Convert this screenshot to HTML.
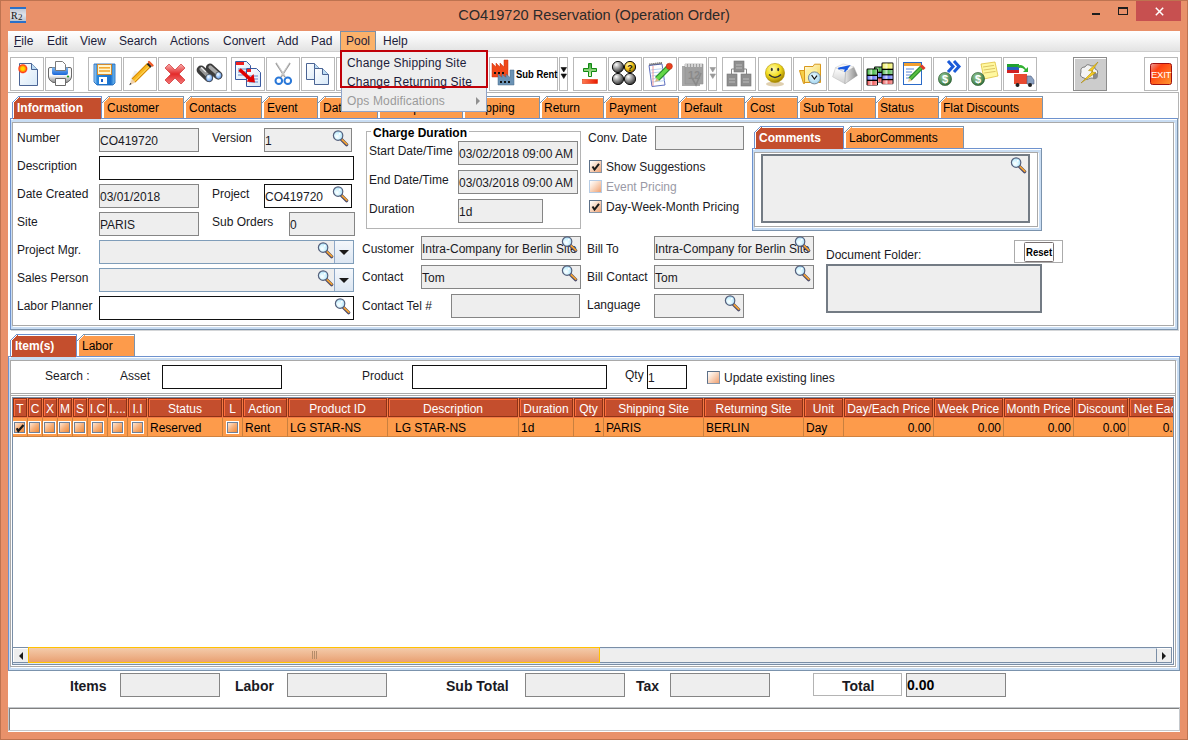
<!DOCTYPE html><html><head><meta charset="utf-8"><style>
*{box-sizing:border-box;margin:0;padding:0}
html,body{width:1188px;height:740px;overflow:hidden}
body{position:relative;background:#E9916A;font-family:"Liberation Sans",sans-serif;font-size:12px;color:#000}
.a{position:absolute}
.t{line-height:14px;white-space:nowrap;color:#1a1a24}
.b{font-weight:bold}
.fg{background:#EEEEEE;border:1px solid #8E8E8E}
.fw{background:#fff;border:1px solid #101010}
.fc{background:#EEEEEE;border:1px solid #7F9DB9}
</style></head><body>
<div class="a " style="left:0px;top:0px;width:1188px;height:740px;border:1px solid #BE7350;"></div>
<div class="a " style="left:8px;top:31px;width:1172px;height:701px;background:#fff;"></div>
<div class="a t" style="left:0;top:6px;width:1188px;text-align:center;font-size:14.6px;line-height:18px;color:#2a2a2a">CO419720 Reservation (Operation Order)</div>
<div class="a " style="left:1136px;top:1px;width:45px;height:20px;background:#C75050;"></div>
<svg class="a" style="left:1155px;top:7px" width="9" height="9"><path d="M0.8 0.8L8.2 8.2M8.2 0.8L0.8 8.2" stroke="#fff" stroke-width="1.5"/></svg>
<div class="a " style="left:1118px;top:7px;width:10px;height:8px;border:1px solid #1e1e1e;border-top-width:2px;"></div>
<div class="a " style="left:1092px;top:13px;width:8px;height:2px;background:#1e1e1e;"></div>
<svg class="a" style="left:10px;top:7px" width="16" height="16"><defs><linearGradient id="r2g" x1="0" y1="0" x2="0" y2="1"><stop offset="0" stop-color="#b8c0cc"/><stop offset="0.5" stop-color="#e0e4ea"/><stop offset="1" stop-color="#b0b8c4"/></linearGradient></defs><rect x="0" y="0" width="16" height="16" fill="url(#r2g)"/><rect x="0" y="0" width="16" height="2" fill="#2a70c8"/><rect x="0" y="14" width="16" height="2" fill="#2a70c8"/><text x="1" y="12" font-family="Liberation Serif" font-size="10" fill="#111">R</text><text x="8" y="12.5" font-family="Liberation Serif" font-size="9" fill="#222">2</text></svg>
<div class="a " style="left:8px;top:31px;width:1172px;height:20px;background:linear-gradient(#ffffff 0%,#f7f7f7 35%,#e3e3e3 100%);"></div>
<div class="a " style="left:8px;top:51px;width:1172px;height:1px;background:#cdcdcd;"></div>
<div class="a " style="left:340px;top:31px;width:36px;height:19px;background:#FBB16A;border:1px solid #7A90A8;border-bottom:none;"></div>
<div class="a t" style="left:14px;top:34px;color:#1c1c3a"><span style="text-decoration:underline;text-underline-offset:1px">F</span>ile</div>
<div class="a t" style="left:47px;top:34px;color:#1c1c3a">Edit</div>
<div class="a t" style="left:80px;top:34px;color:#1c1c3a">View</div>
<div class="a t" style="left:119px;top:34px;color:#1c1c3a">Search</div>
<div class="a t" style="left:170px;top:34px;color:#1c1c3a">Actions</div>
<div class="a t" style="left:223px;top:34px;color:#1c1c3a">Convert</div>
<div class="a t" style="left:277px;top:34px;color:#1c1c3a">Add</div>
<div class="a t" style="left:311px;top:34px;color:#1c1c3a">Pad</div>
<div class="a t" style="left:346px;top:34px;color:#1c1c3a">Pool</div>
<div class="a t" style="left:383px;top:34px;color:#1c1c3a">Help</div>
<div class="a " style="left:8px;top:92px;width:1171px;height:1px;background:#b4b4b4;"></div>
<div class="a " style="left:10px;top:57px;width:34px;height:34px;border:1px solid #b9b9b9;background:#fff;"></div>
<div class="a " style="left:45px;top:57px;width:29px;height:34px;border:1px solid #b9b9b9;background:#fff;"></div>
<div class="a " style="left:88px;top:57px;width:34px;height:34px;border:1px solid #b9b9b9;background:#fff;"></div>
<div class="a " style="left:123px;top:57px;width:34px;height:34px;border:1px solid #b9b9b9;background:#fff;"></div>
<div class="a " style="left:158px;top:57px;width:34px;height:34px;border:1px solid #b9b9b9;background:#fff;"></div>
<div class="a " style="left:193px;top:57px;width:34px;height:34px;border:1px solid #b9b9b9;background:#fff;"></div>
<div class="a " style="left:231px;top:57px;width:34px;height:34px;border:1px solid #b9b9b9;background:#fff;"></div>
<div class="a " style="left:266px;top:57px;width:34px;height:34px;border:1px solid #b9b9b9;background:#fff;"></div>
<div class="a " style="left:301px;top:57px;width:34px;height:34px;border:1px solid #b9b9b9;background:#fff;"></div>
<div class="a " style="left:336px;top:57px;width:34px;height:34px;border:1px solid #b9b9b9;background:#fff;"></div>
<div class="a " style="left:371px;top:57px;width:34px;height:34px;border:1px solid #b9b9b9;background:#fff;"></div>
<div class="a " style="left:406px;top:57px;width:34px;height:34px;border:1px solid #b9b9b9;background:#fff;"></div>
<div class="a " style="left:441px;top:57px;width:34px;height:34px;border:1px solid #b9b9b9;background:#fff;"></div>
<div class="a " style="left:489px;top:57px;width:69px;height:34px;border:1px solid #b9b9b9;background:#fff;"></div>
<div class="a " style="left:559px;top:57px;width:9px;height:34px;border:1px solid #b9b9b9;background:#fff;"></div>
<div class="a " style="left:573px;top:57px;width:34px;height:34px;border:1px solid #b9b9b9;background:#fff;"></div>
<div class="a " style="left:608px;top:57px;width:34px;height:34px;border:1px solid #b9b9b9;background:#fff;"></div>
<div class="a " style="left:643px;top:57px;width:34px;height:34px;border:1px solid #b9b9b9;background:#fff;"></div>
<div class="a " style="left:678px;top:57px;width:29px;height:34px;border:1px solid #b9b9b9;background:#fff;"></div>
<div class="a " style="left:708px;top:57px;width:9px;height:34px;border:1px solid #b9b9b9;background:#fff;"></div>
<div class="a " style="left:722px;top:57px;width:34px;height:34px;border:1px solid #b9b9b9;background:#fff;"></div>
<div class="a " style="left:758px;top:57px;width:34px;height:34px;border:1px solid #b9b9b9;background:#fff;"></div>
<div class="a " style="left:793px;top:57px;width:34px;height:34px;border:1px solid #b9b9b9;background:#fff;"></div>
<div class="a " style="left:828px;top:57px;width:34px;height:34px;border:1px solid #b9b9b9;background:#fff;"></div>
<div class="a " style="left:863px;top:57px;width:34px;height:34px;border:1px solid #b9b9b9;background:#fff;"></div>
<div class="a " style="left:898px;top:57px;width:34px;height:34px;border:1px solid #b9b9b9;background:#fff;"></div>
<div class="a " style="left:933px;top:57px;width:34px;height:34px;border:1px solid #b9b9b9;background:#fff;"></div>
<div class="a " style="left:968px;top:57px;width:34px;height:34px;border:1px solid #b9b9b9;background:#fff;"></div>
<div class="a " style="left:1003px;top:57px;width:34px;height:34px;border:1px solid #b9b9b9;background:#fff;"></div>
<div class="a " style="left:1144px;top:57px;width:34px;height:34px;border:1px solid #b9b9b9;background:#fff;"></div>
<div class="a " style="left:1073px;top:57px;width:34px;height:34px;border:1px solid #8c8c8c;background:#cccccc;box-shadow:inset 1px 1px 0 #fff;"></div>
<div class="a" style="left:11px;top:119px;width:1168px;height:212px;background:#D4D6D8"></div>
<div class="a" style="left:10px;top:118px;width:1168px;height:212px;border:1px solid #6E92CE;border-right-color:#7B93AD;border-bottom-color:#7B93AD;background:#C9DDF3"></div>
<div class="a" style="left:11px;top:119px;width:1166px;height:1px;background:#fff"></div>
<div class="a" style="left:13px;top:118px;width:88px;height:2px;background:#C9DDF3"></div>
<div class="a" style="left:12px;top:122px;width:1162px;height:204px;border:1px solid #A9A9A9;box-shadow:1px 1px 0 #fff;background:#fff"></div>
<div class="a" style="left:1178px;top:92px;width:1px;height:27px;background:#B4B4B4"></div>
<svg class="a" style="left:0;top:96px" width="1188" height="23" shape-rendering="crispEdges"><polygon points="13,23 13,7 19,1 101,1 101,23" fill="#C44E2D"/><path d="M19.5 1.5H101M13.5 7V22" stroke="#fff" stroke-width="1" fill="none"/><path d="M18 0.5H102M101.5 0V22" stroke="#6E92CE" stroke-width="1" fill="none"/><rect x="12" y="6" width="1" height="1" fill="#6E92CE"/><rect x="13" y="5" width="1" height="1" fill="#6E92CE"/><rect x="14" y="4" width="1" height="1" fill="#6E92CE"/><rect x="15" y="3" width="1" height="1" fill="#6E92CE"/><rect x="16" y="2" width="1" height="1" fill="#6E92CE"/><rect x="17" y="1" width="1" height="1" fill="#6E92CE"/><rect x="18" y="0" width="1" height="1" fill="#6E92CE"/><path d="M12.5 6V23" stroke="#6E92CE" stroke-width="1" fill="none"/></svg>
<div class="a t" style="left:17px;top:101px;color:#fff;font-weight:bold;">Information</div>
<svg class="a" style="left:0;top:96px" width="1188" height="23" shape-rendering="crispEdges"><polygon points="103,22 103,7 109,1 183,1 183,22" fill="#FD9B4B"/><path d="M109.5 1.5H183M103.5 7V22" stroke="#fff" stroke-width="1" fill="none"/><path d="M108 0.5H184M183.5 0V22" stroke="#7B93AD" stroke-width="1" fill="none"/><rect x="102" y="6" width="1" height="1" fill="#7B93AD"/><rect x="103" y="5" width="1" height="1" fill="#7B93AD"/><rect x="104" y="4" width="1" height="1" fill="#7B93AD"/><rect x="105" y="3" width="1" height="1" fill="#7B93AD"/><rect x="106" y="2" width="1" height="1" fill="#7B93AD"/><rect x="107" y="1" width="1" height="1" fill="#7B93AD"/><rect x="108" y="0" width="1" height="1" fill="#7B93AD"/></svg>
<div class="a t" style="left:107px;top:101px;color:#000;">Customer</div>
<svg class="a" style="left:0;top:96px" width="1188" height="23" shape-rendering="crispEdges"><polygon points="185,22 185,7 191,1 261,1 261,22" fill="#FD9B4B"/><path d="M191.5 1.5H261M185.5 7V22" stroke="#fff" stroke-width="1" fill="none"/><path d="M190 0.5H262M261.5 0V22" stroke="#7B93AD" stroke-width="1" fill="none"/><rect x="184" y="6" width="1" height="1" fill="#7B93AD"/><rect x="185" y="5" width="1" height="1" fill="#7B93AD"/><rect x="186" y="4" width="1" height="1" fill="#7B93AD"/><rect x="187" y="3" width="1" height="1" fill="#7B93AD"/><rect x="188" y="2" width="1" height="1" fill="#7B93AD"/><rect x="189" y="1" width="1" height="1" fill="#7B93AD"/><rect x="190" y="0" width="1" height="1" fill="#7B93AD"/></svg>
<div class="a t" style="left:189px;top:101px;color:#000;">Contacts</div>
<svg class="a" style="left:0;top:96px" width="1188" height="23" shape-rendering="crispEdges"><polygon points="263,22 263,7 269,1 317,1 317,22" fill="#FD9B4B"/><path d="M269.5 1.5H317M263.5 7V22" stroke="#fff" stroke-width="1" fill="none"/><path d="M268 0.5H318M317.5 0V22" stroke="#7B93AD" stroke-width="1" fill="none"/><rect x="262" y="6" width="1" height="1" fill="#7B93AD"/><rect x="263" y="5" width="1" height="1" fill="#7B93AD"/><rect x="264" y="4" width="1" height="1" fill="#7B93AD"/><rect x="265" y="3" width="1" height="1" fill="#7B93AD"/><rect x="266" y="2" width="1" height="1" fill="#7B93AD"/><rect x="267" y="1" width="1" height="1" fill="#7B93AD"/><rect x="268" y="0" width="1" height="1" fill="#7B93AD"/></svg>
<div class="a t" style="left:267px;top:101px;color:#000;">Event</div>
<svg class="a" style="left:0;top:96px" width="1188" height="23" shape-rendering="crispEdges"><polygon points="319,22 319,7 325,1 377,1 377,22" fill="#FD9B4B"/><path d="M325.5 1.5H377M319.5 7V22" stroke="#fff" stroke-width="1" fill="none"/><path d="M324 0.5H378M377.5 0V22" stroke="#7B93AD" stroke-width="1" fill="none"/><rect x="318" y="6" width="1" height="1" fill="#7B93AD"/><rect x="319" y="5" width="1" height="1" fill="#7B93AD"/><rect x="320" y="4" width="1" height="1" fill="#7B93AD"/><rect x="321" y="3" width="1" height="1" fill="#7B93AD"/><rect x="322" y="2" width="1" height="1" fill="#7B93AD"/><rect x="323" y="1" width="1" height="1" fill="#7B93AD"/><rect x="324" y="0" width="1" height="1" fill="#7B93AD"/></svg>
<div class="a t" style="left:323px;top:101px;color:#000;">Date</div>
<svg class="a" style="left:0;top:96px" width="1188" height="23" shape-rendering="crispEdges"><polygon points="379,22 379,7 385,1 462,1 462,22" fill="#FD9B4B"/><path d="M385.5 1.5H462M379.5 7V22" stroke="#fff" stroke-width="1" fill="none"/><path d="M384 0.5H463M462.5 0V22" stroke="#7B93AD" stroke-width="1" fill="none"/><rect x="378" y="6" width="1" height="1" fill="#7B93AD"/><rect x="379" y="5" width="1" height="1" fill="#7B93AD"/><rect x="380" y="4" width="1" height="1" fill="#7B93AD"/><rect x="381" y="3" width="1" height="1" fill="#7B93AD"/><rect x="382" y="2" width="1" height="1" fill="#7B93AD"/><rect x="383" y="1" width="1" height="1" fill="#7B93AD"/><rect x="384" y="0" width="1" height="1" fill="#7B93AD"/></svg>
<div class="a t" style="left:383px;top:101px;color:#000;">Transport</div>
<svg class="a" style="left:0;top:96px" width="1188" height="23" shape-rendering="crispEdges"><polygon points="464,22 464,7 470,1 539,1 539,22" fill="#FD9B4B"/><path d="M470.5 1.5H539M464.5 7V22" stroke="#fff" stroke-width="1" fill="none"/><path d="M469 0.5H540M539.5 0V22" stroke="#7B93AD" stroke-width="1" fill="none"/><rect x="463" y="6" width="1" height="1" fill="#7B93AD"/><rect x="464" y="5" width="1" height="1" fill="#7B93AD"/><rect x="465" y="4" width="1" height="1" fill="#7B93AD"/><rect x="466" y="3" width="1" height="1" fill="#7B93AD"/><rect x="467" y="2" width="1" height="1" fill="#7B93AD"/><rect x="468" y="1" width="1" height="1" fill="#7B93AD"/><rect x="469" y="0" width="1" height="1" fill="#7B93AD"/></svg>
<div class="a t" style="left:468px;top:101px;color:#000;">Shipping</div>
<svg class="a" style="left:0;top:96px" width="1188" height="23" shape-rendering="crispEdges"><polygon points="541,22 541,7 547,1 603,1 603,22" fill="#FD9B4B"/><path d="M547.5 1.5H603M541.5 7V22" stroke="#fff" stroke-width="1" fill="none"/><path d="M546 0.5H604M603.5 0V22" stroke="#7B93AD" stroke-width="1" fill="none"/><rect x="540" y="6" width="1" height="1" fill="#7B93AD"/><rect x="541" y="5" width="1" height="1" fill="#7B93AD"/><rect x="542" y="4" width="1" height="1" fill="#7B93AD"/><rect x="543" y="3" width="1" height="1" fill="#7B93AD"/><rect x="544" y="2" width="1" height="1" fill="#7B93AD"/><rect x="545" y="1" width="1" height="1" fill="#7B93AD"/><rect x="546" y="0" width="1" height="1" fill="#7B93AD"/></svg>
<div class="a t" style="left:544px;top:101px;color:#000;">Return</div>
<svg class="a" style="left:0;top:96px" width="1188" height="23" shape-rendering="crispEdges"><polygon points="605,22 605,7 611,1 678,1 678,22" fill="#FD9B4B"/><path d="M611.5 1.5H678M605.5 7V22" stroke="#fff" stroke-width="1" fill="none"/><path d="M610 0.5H679M678.5 0V22" stroke="#7B93AD" stroke-width="1" fill="none"/><rect x="604" y="6" width="1" height="1" fill="#7B93AD"/><rect x="605" y="5" width="1" height="1" fill="#7B93AD"/><rect x="606" y="4" width="1" height="1" fill="#7B93AD"/><rect x="607" y="3" width="1" height="1" fill="#7B93AD"/><rect x="608" y="2" width="1" height="1" fill="#7B93AD"/><rect x="609" y="1" width="1" height="1" fill="#7B93AD"/><rect x="610" y="0" width="1" height="1" fill="#7B93AD"/></svg>
<div class="a t" style="left:609px;top:101px;color:#000;">Payment</div>
<svg class="a" style="left:0;top:96px" width="1188" height="23" shape-rendering="crispEdges"><polygon points="680,22 680,7 686,1 744,1 744,22" fill="#FD9B4B"/><path d="M686.5 1.5H744M680.5 7V22" stroke="#fff" stroke-width="1" fill="none"/><path d="M685 0.5H745M744.5 0V22" stroke="#7B93AD" stroke-width="1" fill="none"/><rect x="679" y="6" width="1" height="1" fill="#7B93AD"/><rect x="680" y="5" width="1" height="1" fill="#7B93AD"/><rect x="681" y="4" width="1" height="1" fill="#7B93AD"/><rect x="682" y="3" width="1" height="1" fill="#7B93AD"/><rect x="683" y="2" width="1" height="1" fill="#7B93AD"/><rect x="684" y="1" width="1" height="1" fill="#7B93AD"/><rect x="685" y="0" width="1" height="1" fill="#7B93AD"/></svg>
<div class="a t" style="left:684px;top:101px;color:#000;">Default</div>
<svg class="a" style="left:0;top:96px" width="1188" height="23" shape-rendering="crispEdges"><polygon points="746,22 746,7 752,1 797,1 797,22" fill="#FD9B4B"/><path d="M752.5 1.5H797M746.5 7V22" stroke="#fff" stroke-width="1" fill="none"/><path d="M751 0.5H798M797.5 0V22" stroke="#7B93AD" stroke-width="1" fill="none"/><rect x="745" y="6" width="1" height="1" fill="#7B93AD"/><rect x="746" y="5" width="1" height="1" fill="#7B93AD"/><rect x="747" y="4" width="1" height="1" fill="#7B93AD"/><rect x="748" y="3" width="1" height="1" fill="#7B93AD"/><rect x="749" y="2" width="1" height="1" fill="#7B93AD"/><rect x="750" y="1" width="1" height="1" fill="#7B93AD"/><rect x="751" y="0" width="1" height="1" fill="#7B93AD"/></svg>
<div class="a t" style="left:750px;top:101px;color:#000;">Cost</div>
<svg class="a" style="left:0;top:96px" width="1188" height="23" shape-rendering="crispEdges"><polygon points="799,22 799,7 805,1 875,1 875,22" fill="#FD9B4B"/><path d="M805.5 1.5H875M799.5 7V22" stroke="#fff" stroke-width="1" fill="none"/><path d="M804 0.5H876M875.5 0V22" stroke="#7B93AD" stroke-width="1" fill="none"/><rect x="798" y="6" width="1" height="1" fill="#7B93AD"/><rect x="799" y="5" width="1" height="1" fill="#7B93AD"/><rect x="800" y="4" width="1" height="1" fill="#7B93AD"/><rect x="801" y="3" width="1" height="1" fill="#7B93AD"/><rect x="802" y="2" width="1" height="1" fill="#7B93AD"/><rect x="803" y="1" width="1" height="1" fill="#7B93AD"/><rect x="804" y="0" width="1" height="1" fill="#7B93AD"/></svg>
<div class="a t" style="left:803px;top:101px;color:#000;">Sub Total</div>
<svg class="a" style="left:0;top:96px" width="1188" height="23" shape-rendering="crispEdges"><polygon points="877,22 877,7 883,1 938,1 938,22" fill="#FD9B4B"/><path d="M883.5 1.5H938M877.5 7V22" stroke="#fff" stroke-width="1" fill="none"/><path d="M882 0.5H939M938.5 0V22" stroke="#7B93AD" stroke-width="1" fill="none"/><rect x="876" y="6" width="1" height="1" fill="#7B93AD"/><rect x="877" y="5" width="1" height="1" fill="#7B93AD"/><rect x="878" y="4" width="1" height="1" fill="#7B93AD"/><rect x="879" y="3" width="1" height="1" fill="#7B93AD"/><rect x="880" y="2" width="1" height="1" fill="#7B93AD"/><rect x="881" y="1" width="1" height="1" fill="#7B93AD"/><rect x="882" y="0" width="1" height="1" fill="#7B93AD"/></svg>
<div class="a t" style="left:880px;top:101px;color:#000;">Status</div>
<svg class="a" style="left:0;top:96px" width="1188" height="23" shape-rendering="crispEdges"><polygon points="940,22 940,7 946,1 1042,1 1042,22" fill="#FD9B4B"/><path d="M946.5 1.5H1042M940.5 7V22" stroke="#fff" stroke-width="1" fill="none"/><path d="M945 0.5H1043M1042.5 0V22" stroke="#7B93AD" stroke-width="1" fill="none"/><rect x="939" y="6" width="1" height="1" fill="#7B93AD"/><rect x="940" y="5" width="1" height="1" fill="#7B93AD"/><rect x="941" y="4" width="1" height="1" fill="#7B93AD"/><rect x="942" y="3" width="1" height="1" fill="#7B93AD"/><rect x="943" y="2" width="1" height="1" fill="#7B93AD"/><rect x="944" y="1" width="1" height="1" fill="#7B93AD"/><rect x="945" y="0" width="1" height="1" fill="#7B93AD"/></svg>
<div class="a t" style="left:943px;top:101px;color:#000;">Flat Discounts</div>
<div class="a t" style="left:17px;top:131px;">Number</div>
<div class="a t" style="left:17px;top:159px;">Description</div>
<div class="a t" style="left:17px;top:187px;">Date Created</div>
<div class="a t" style="left:17px;top:215px;">Site</div>
<div class="a t" style="left:17px;top:243px;">Project Mgr.</div>
<div class="a t" style="left:17px;top:271px;">Sales Person</div>
<div class="a t" style="left:17px;top:299px;">Labor Planner</div>
<div class="a t" style="left:212px;top:131px;">Version</div>
<div class="a t" style="left:212px;top:187px;">Project</div>
<div class="a t" style="left:212px;top:215px;">Sub Orders</div>
<div class="a" style="left:99px;top:128px;width:100px;height:24px;background:#EEEEEE;border:1px solid #858585;"></div>
<div class="a t" style="left:100px;top:134px;color:#1a1a24">CO419720</div>
<div class="a" style="left:264px;top:128px;width:88px;height:24px;background:#EEEEEE;border:1px solid #858585;"></div>
<div class="a t" style="left:265px;top:134px;color:#1a1a24">1</div>
<svg class="a" style="left:332px;top:130px" width="17" height="17" viewBox="0 0 17 17"><defs><radialGradient id="lg" cx="0.4" cy="0.6" r="0.6"><stop offset="0" stop-color="#ffffff"/><stop offset="0.5" stop-color="#d8f6ff"/><stop offset="1" stop-color="#a9dcf5"/></radialGradient></defs><line x1="9.6" y1="9.6" x2="14.6" y2="14.6" stroke="#4a4a6a" stroke-width="3.4" stroke-linecap="round"/><line x1="10.2" y1="9.8" x2="14.8" y2="14.2" stroke="#F2A233" stroke-width="1.8" stroke-linecap="round"/><circle cx="6.1" cy="5.6" r="4.7" fill="url(#lg)" stroke="#55607c" stroke-width="1.2"/><circle cx="7.8" cy="3.8" r="1" fill="#fff"/></svg>
<div class="a" style="left:99px;top:156px;width:255px;height:24px;background:#fff;border:1px solid #111;"></div>
<div class="a" style="left:99px;top:184px;width:100px;height:24px;background:#EEEEEE;border:1px solid #858585;"></div>
<div class="a t" style="left:100px;top:190px;color:#1a1a24">03/01/2018</div>
<div class="a" style="left:264px;top:184px;width:88px;height:24px;background:#fff;border:1px solid #111;"></div>
<div class="a t" style="left:265px;top:190px;color:#1a1a24">CO419720</div>
<svg class="a" style="left:332px;top:186px" width="17" height="17" viewBox="0 0 17 17"><defs><radialGradient id="lg" cx="0.4" cy="0.6" r="0.6"><stop offset="0" stop-color="#ffffff"/><stop offset="0.5" stop-color="#d8f6ff"/><stop offset="1" stop-color="#a9dcf5"/></radialGradient></defs><line x1="9.6" y1="9.6" x2="14.6" y2="14.6" stroke="#4a4a6a" stroke-width="3.4" stroke-linecap="round"/><line x1="10.2" y1="9.8" x2="14.8" y2="14.2" stroke="#F2A233" stroke-width="1.8" stroke-linecap="round"/><circle cx="6.1" cy="5.6" r="4.7" fill="url(#lg)" stroke="#55607c" stroke-width="1.2"/><circle cx="7.8" cy="3.8" r="1" fill="#fff"/></svg>
<div class="a" style="left:99px;top:212px;width:100px;height:24px;background:#EEEEEE;border:1px solid #858585;"></div>
<div class="a t" style="left:100px;top:218px;color:#1a1a24">PARIS</div>
<div class="a" style="left:289px;top:212px;width:66px;height:24px;background:#EEEEEE;border:1px solid #858585;"></div>
<div class="a t" style="left:290px;top:218px;color:#1a1a24">0</div>
<div class="a" style="left:99px;top:240px;width:255px;height:24px;background:#EEEEEE;border:1px solid #7F9DB9;"></div>
<div class="a" style="left:334px;top:241px;width:19px;height:22px;background:linear-gradient(#f4f7fb,#dce6f2);border-left:1px solid #8FA8C8"></div>
<div class="a" style="left:339px;top:250px;width:0;height:0;border-top:5px solid #1a1a1a;border-left:5px solid transparent;border-right:5px solid transparent"></div>
<svg class="a" style="left:317px;top:242px" width="17" height="17" viewBox="0 0 17 17"><defs><radialGradient id="lg" cx="0.4" cy="0.6" r="0.6"><stop offset="0" stop-color="#ffffff"/><stop offset="0.5" stop-color="#d8f6ff"/><stop offset="1" stop-color="#a9dcf5"/></radialGradient></defs><line x1="9.6" y1="9.6" x2="14.6" y2="14.6" stroke="#4a4a6a" stroke-width="3.4" stroke-linecap="round"/><line x1="10.2" y1="9.8" x2="14.8" y2="14.2" stroke="#F2A233" stroke-width="1.8" stroke-linecap="round"/><circle cx="6.1" cy="5.6" r="4.7" fill="url(#lg)" stroke="#55607c" stroke-width="1.2"/><circle cx="7.8" cy="3.8" r="1" fill="#fff"/></svg>
<div class="a" style="left:99px;top:268px;width:255px;height:24px;background:#EEEEEE;border:1px solid #7F9DB9;"></div>
<div class="a" style="left:334px;top:269px;width:19px;height:22px;background:linear-gradient(#f4f7fb,#dce6f2);border-left:1px solid #8FA8C8"></div>
<div class="a" style="left:339px;top:278px;width:0;height:0;border-top:5px solid #1a1a1a;border-left:5px solid transparent;border-right:5px solid transparent"></div>
<svg class="a" style="left:317px;top:270px" width="17" height="17" viewBox="0 0 17 17"><defs><radialGradient id="lg" cx="0.4" cy="0.6" r="0.6"><stop offset="0" stop-color="#ffffff"/><stop offset="0.5" stop-color="#d8f6ff"/><stop offset="1" stop-color="#a9dcf5"/></radialGradient></defs><line x1="9.6" y1="9.6" x2="14.6" y2="14.6" stroke="#4a4a6a" stroke-width="3.4" stroke-linecap="round"/><line x1="10.2" y1="9.8" x2="14.8" y2="14.2" stroke="#F2A233" stroke-width="1.8" stroke-linecap="round"/><circle cx="6.1" cy="5.6" r="4.7" fill="url(#lg)" stroke="#55607c" stroke-width="1.2"/><circle cx="7.8" cy="3.8" r="1" fill="#fff"/></svg>
<div class="a" style="left:99px;top:296px;width:255px;height:24px;background:#fff;border:1px solid #111;"></div>
<svg class="a" style="left:334px;top:298px" width="17" height="17" viewBox="0 0 17 17"><defs><radialGradient id="lg" cx="0.4" cy="0.6" r="0.6"><stop offset="0" stop-color="#ffffff"/><stop offset="0.5" stop-color="#d8f6ff"/><stop offset="1" stop-color="#a9dcf5"/></radialGradient></defs><line x1="9.6" y1="9.6" x2="14.6" y2="14.6" stroke="#4a4a6a" stroke-width="3.4" stroke-linecap="round"/><line x1="10.2" y1="9.8" x2="14.8" y2="14.2" stroke="#F2A233" stroke-width="1.8" stroke-linecap="round"/><circle cx="6.1" cy="5.6" r="4.7" fill="url(#lg)" stroke="#55607c" stroke-width="1.2"/><circle cx="7.8" cy="3.8" r="1" fill="#fff"/></svg>
<div class="a" style="left:366px;top:131px;width:215px;height:98px;border:1px solid #B4B4B4"></div>
<div class="a t b" style="left:371px;top:126px;background:#fff;padding:0 2px;color:#000">Charge Duration</div>
<div class="a t" style="left:369px;top:144px;">Start Date/Time</div>
<div class="a" style="left:458px;top:141px;width:120px;height:24px;background:#EEEEEE;border:1px solid #858585;"></div>
<div class="a t" style="left:459px;top:147px;color:#1a1a24">03/02/2018 09:00 AM</div>
<div class="a t" style="left:369px;top:173px;">End Date/Time</div>
<div class="a" style="left:458px;top:170px;width:120px;height:24px;background:#EEEEEE;border:1px solid #858585;"></div>
<div class="a t" style="left:459px;top:176px;color:#1a1a24">03/03/2018 09:00 AM</div>
<div class="a t" style="left:369px;top:202px;">Duration</div>
<div class="a" style="left:458px;top:199px;width:85px;height:24px;background:#EEEEEE;border:1px solid #858585;"></div>
<div class="a t" style="left:459px;top:205px;color:#1a1a24">1d</div>
<div class="a t" style="left:362px;top:242px;">Customer</div>
<div class="a" style="left:421px;top:236px;width:160px;height:24px;background:#EEEEEE;border:1px solid #858585;"></div>
<div class="a t" style="left:422px;top:242px;color:#1a1a24">Intra-Company for Berlin Site</div>
<svg class="a" style="left:561px;top:236px" width="17" height="17" viewBox="0 0 17 17"><defs><radialGradient id="lg" cx="0.4" cy="0.6" r="0.6"><stop offset="0" stop-color="#ffffff"/><stop offset="0.5" stop-color="#d8f6ff"/><stop offset="1" stop-color="#a9dcf5"/></radialGradient></defs><line x1="9.6" y1="9.6" x2="14.6" y2="14.6" stroke="#4a4a6a" stroke-width="3.4" stroke-linecap="round"/><line x1="10.2" y1="9.8" x2="14.8" y2="14.2" stroke="#F2A233" stroke-width="1.8" stroke-linecap="round"/><circle cx="6.1" cy="5.6" r="4.7" fill="url(#lg)" stroke="#55607c" stroke-width="1.2"/><circle cx="7.8" cy="3.8" r="1" fill="#fff"/></svg>
<div class="a t" style="left:362px;top:270px;">Contact</div>
<div class="a" style="left:421px;top:265px;width:160px;height:24px;background:#EEEEEE;border:1px solid #858585;"></div>
<div class="a t" style="left:422px;top:271px;color:#1a1a24">Tom</div>
<svg class="a" style="left:561px;top:265px" width="17" height="17" viewBox="0 0 17 17"><defs><radialGradient id="lg" cx="0.4" cy="0.6" r="0.6"><stop offset="0" stop-color="#ffffff"/><stop offset="0.5" stop-color="#d8f6ff"/><stop offset="1" stop-color="#a9dcf5"/></radialGradient></defs><line x1="9.6" y1="9.6" x2="14.6" y2="14.6" stroke="#4a4a6a" stroke-width="3.4" stroke-linecap="round"/><line x1="10.2" y1="9.8" x2="14.8" y2="14.2" stroke="#F2A233" stroke-width="1.8" stroke-linecap="round"/><circle cx="6.1" cy="5.6" r="4.7" fill="url(#lg)" stroke="#55607c" stroke-width="1.2"/><circle cx="7.8" cy="3.8" r="1" fill="#fff"/></svg>
<div class="a t" style="left:362px;top:299px;">Contact Tel #</div>
<div class="a" style="left:451px;top:294px;width:129px;height:24px;background:#EEEEEE;border:1px solid #858585;"></div>
<div class="a t" style="left:587px;top:242px;">Bill To</div>
<div class="a" style="left:654px;top:236px;width:160px;height:24px;background:#EEEEEE;border:1px solid #858585;"></div>
<div class="a t" style="left:655px;top:242px;color:#1a1a24">Intra-Company for Berlin Site</div>
<svg class="a" style="left:794px;top:236px" width="17" height="17" viewBox="0 0 17 17"><defs><radialGradient id="lg" cx="0.4" cy="0.6" r="0.6"><stop offset="0" stop-color="#ffffff"/><stop offset="0.5" stop-color="#d8f6ff"/><stop offset="1" stop-color="#a9dcf5"/></radialGradient></defs><line x1="9.6" y1="9.6" x2="14.6" y2="14.6" stroke="#4a4a6a" stroke-width="3.4" stroke-linecap="round"/><line x1="10.2" y1="9.8" x2="14.8" y2="14.2" stroke="#F2A233" stroke-width="1.8" stroke-linecap="round"/><circle cx="6.1" cy="5.6" r="4.7" fill="url(#lg)" stroke="#55607c" stroke-width="1.2"/><circle cx="7.8" cy="3.8" r="1" fill="#fff"/></svg>
<div class="a t" style="left:587px;top:270px;">Bill Contact</div>
<div class="a" style="left:654px;top:265px;width:160px;height:24px;background:#EEEEEE;border:1px solid #858585;"></div>
<div class="a t" style="left:655px;top:271px;color:#1a1a24">Tom</div>
<svg class="a" style="left:794px;top:265px" width="17" height="17" viewBox="0 0 17 17"><defs><radialGradient id="lg" cx="0.4" cy="0.6" r="0.6"><stop offset="0" stop-color="#ffffff"/><stop offset="0.5" stop-color="#d8f6ff"/><stop offset="1" stop-color="#a9dcf5"/></radialGradient></defs><line x1="9.6" y1="9.6" x2="14.6" y2="14.6" stroke="#4a4a6a" stroke-width="3.4" stroke-linecap="round"/><line x1="10.2" y1="9.8" x2="14.8" y2="14.2" stroke="#F2A233" stroke-width="1.8" stroke-linecap="round"/><circle cx="6.1" cy="5.6" r="4.7" fill="url(#lg)" stroke="#55607c" stroke-width="1.2"/><circle cx="7.8" cy="3.8" r="1" fill="#fff"/></svg>
<div class="a t" style="left:587px;top:298px;">Language</div>
<div class="a" style="left:654px;top:294px;width:90px;height:24px;background:#EEEEEE;border:1px solid #858585;"></div>
<svg class="a" style="left:724px;top:295px" width="17" height="17" viewBox="0 0 17 17"><defs><radialGradient id="lg" cx="0.4" cy="0.6" r="0.6"><stop offset="0" stop-color="#ffffff"/><stop offset="0.5" stop-color="#d8f6ff"/><stop offset="1" stop-color="#a9dcf5"/></radialGradient></defs><line x1="9.6" y1="9.6" x2="14.6" y2="14.6" stroke="#4a4a6a" stroke-width="3.4" stroke-linecap="round"/><line x1="10.2" y1="9.8" x2="14.8" y2="14.2" stroke="#F2A233" stroke-width="1.8" stroke-linecap="round"/><circle cx="6.1" cy="5.6" r="4.7" fill="url(#lg)" stroke="#55607c" stroke-width="1.2"/><circle cx="7.8" cy="3.8" r="1" fill="#fff"/></svg>
<div class="a t" style="left:588px;top:131px;">Conv. Date</div>
<div class="a" style="left:655px;top:126px;width:89px;height:24px;background:#EEEEEE;border:1px solid #858585;"></div>
<div class="a" style="left:589px;top:160px;width:13px;height:13px;border:1px solid #5C7088;border-right-color:#8796a8;border-bottom-color:#8796a8;background:linear-gradient(135deg,#ffffff 0%,#fbe3d2 35%,#F0A070 100%)"></div>
<svg class="a" style="left:589px;top:160px" width="13" height="13"><path d="M3.5 6.5 L5.5 9.5 L10 3.8" stroke="#1a1a1a" stroke-width="2" fill="none"/></svg>
<div class="a t" style="left:606px;top:160px;">Show Suggestions</div>
<div class="a" style="left:589px;top:180px;width:13px;height:13px;border:1px solid #B7CCE4;border-right-color:#B7CCE4;border-bottom-color:#B7CCE4;background:linear-gradient(135deg,#ffffff 0%,#fbe3d2 35%,#F0A070 100%)"></div>
<div class="a t" style="left:606px;top:180px;color:#9a9aa6;">Event Pricing</div>
<div class="a" style="left:589px;top:200px;width:13px;height:13px;border:1px solid #5C7088;border-right-color:#8796a8;border-bottom-color:#8796a8;background:linear-gradient(135deg,#ffffff 0%,#fbe3d2 35%,#F0A070 100%)"></div>
<svg class="a" style="left:589px;top:200px" width="13" height="13"><path d="M3.5 6.5 L5.5 9.5 L10 3.8" stroke="#1a1a1a" stroke-width="2" fill="none"/></svg>
<div class="a t" style="left:606px;top:200px;">Day-Week-Month Pricing</div>
<div class="a" style="left:752px;top:148px;width:290px;height:83px;border:1px solid #6E92CE;border-right-color:#7B93AD;border-bottom-color:#7B93AD;background:#C9DDF3"></div>
<div class="a" style="left:753px;top:149px;width:288px;height:1px;background:#fff"></div>
<div class="a" style="left:755px;top:148px;width:88px;height:2px;background:#C9DDF3"></div>
<div class="a" style="left:754px;top:152px;width:284px;height:75px;border:1px solid #A9A9A9;box-shadow:1px 1px 0 #fff;background:#fff"></div>
<svg class="a" style="left:0;top:126px" width="1188" height="23" shape-rendering="crispEdges"><polygon points="755,23 755,7 761,1 843,1 843,23" fill="#C44E2D"/><path d="M761.5 1.5H843M755.5 7V22" stroke="#fff" stroke-width="1" fill="none"/><path d="M760 0.5H844M843.5 0V22" stroke="#6E92CE" stroke-width="1" fill="none"/><rect x="754" y="6" width="1" height="1" fill="#6E92CE"/><rect x="755" y="5" width="1" height="1" fill="#6E92CE"/><rect x="756" y="4" width="1" height="1" fill="#6E92CE"/><rect x="757" y="3" width="1" height="1" fill="#6E92CE"/><rect x="758" y="2" width="1" height="1" fill="#6E92CE"/><rect x="759" y="1" width="1" height="1" fill="#6E92CE"/><rect x="760" y="0" width="1" height="1" fill="#6E92CE"/><path d="M754.5 6V23" stroke="#6E92CE" stroke-width="1" fill="none"/></svg>
<div class="a t" style="left:759px;top:131px;color:#fff;font-weight:bold;">Comments</div>
<svg class="a" style="left:0;top:126px" width="1188" height="23" shape-rendering="crispEdges"><polygon points="845,22 845,7 851,1 963,1 963,22" fill="#FD9B4B"/><path d="M851.5 1.5H963M845.5 7V22" stroke="#fff" stroke-width="1" fill="none"/><path d="M850 0.5H964M963.5 0V22" stroke="#7B93AD" stroke-width="1" fill="none"/><rect x="844" y="6" width="1" height="1" fill="#7B93AD"/><rect x="845" y="5" width="1" height="1" fill="#7B93AD"/><rect x="846" y="4" width="1" height="1" fill="#7B93AD"/><rect x="847" y="3" width="1" height="1" fill="#7B93AD"/><rect x="848" y="2" width="1" height="1" fill="#7B93AD"/><rect x="849" y="1" width="1" height="1" fill="#7B93AD"/><rect x="850" y="0" width="1" height="1" fill="#7B93AD"/></svg>
<div class="a t" style="left:849px;top:131px;color:#000;">LaborComments</div>
<div class="a" style="left:761px;top:154px;width:269px;height:69px;background:#EEEEEE;border:2px solid #737b84;"></div>
<svg class="a" style="left:1010px;top:157px" width="17" height="17" viewBox="0 0 17 17"><defs><radialGradient id="lg" cx="0.4" cy="0.6" r="0.6"><stop offset="0" stop-color="#ffffff"/><stop offset="0.5" stop-color="#d8f6ff"/><stop offset="1" stop-color="#a9dcf5"/></radialGradient></defs><line x1="9.6" y1="9.6" x2="14.6" y2="14.6" stroke="#4a4a6a" stroke-width="3.4" stroke-linecap="round"/><line x1="10.2" y1="9.8" x2="14.8" y2="14.2" stroke="#F2A233" stroke-width="1.8" stroke-linecap="round"/><circle cx="6.1" cy="5.6" r="4.7" fill="url(#lg)" stroke="#55607c" stroke-width="1.2"/><circle cx="7.8" cy="3.8" r="1" fill="#fff"/></svg>
<div class="a t" style="left:826px;top:248px;">Document Folder:</div>
<div class="a" style="left:1014px;top:240px;width:49px;height:23px;border:1px solid #ABABAB;background:#fff"></div>
<div class="a" style="left:1024px;top:242px;width:30px;height:20px;border:1px solid #7A7272;border-radius:1.5px;background:#fff"></div>
<div class="a t" style="left:1026px;top:245px;font-size:11px;font-weight:bold;color:#000;transform:scaleX(0.87);transform-origin:0 0">Reset</div>
<div class="a" style="left:826px;top:264px;width:216px;height:49px;background:#EEEEEE;border:2px solid #737b84;"></div>
<div class="a" style="left:8px;top:356px;width:1172px;height:315px;border:1px solid #6E92CE;border-right-color:#7B93AD;border-bottom-color:#7B93AD;background:#C9DDF3"></div>
<div class="a" style="left:9px;top:357px;width:1170px;height:1px;background:#fff"></div>
<div class="a" style="left:11px;top:356px;width:65px;height:2px;background:#C9DDF3"></div>
<div class="a" style="left:10px;top:360px;width:1166px;height:307px;border:1px solid #A9A9A9;box-shadow:1px 1px 0 #fff;background:#fff"></div>
<svg class="a" style="left:0;top:334px" width="1188" height="23" shape-rendering="crispEdges"><polygon points="11,23 11,7 17,1 76,1 76,23" fill="#C44E2D"/><path d="M17.5 1.5H76M11.5 7V22" stroke="#fff" stroke-width="1" fill="none"/><path d="M16 0.5H77M76.5 0V22" stroke="#6E92CE" stroke-width="1" fill="none"/><rect x="10" y="6" width="1" height="1" fill="#6E92CE"/><rect x="11" y="5" width="1" height="1" fill="#6E92CE"/><rect x="12" y="4" width="1" height="1" fill="#6E92CE"/><rect x="13" y="3" width="1" height="1" fill="#6E92CE"/><rect x="14" y="2" width="1" height="1" fill="#6E92CE"/><rect x="15" y="1" width="1" height="1" fill="#6E92CE"/><rect x="16" y="0" width="1" height="1" fill="#6E92CE"/><path d="M10.5 6V23" stroke="#6E92CE" stroke-width="1" fill="none"/></svg>
<div class="a t" style="left:15px;top:339px;color:#fff;font-weight:bold;">Item(s)</div>
<svg class="a" style="left:0;top:334px" width="1188" height="23" shape-rendering="crispEdges"><polygon points="78,22 78,7 84,1 134,1 134,22" fill="#FD9B4B"/><path d="M84.5 1.5H134M78.5 7V22" stroke="#fff" stroke-width="1" fill="none"/><path d="M83 0.5H135M134.5 0V22" stroke="#7B93AD" stroke-width="1" fill="none"/><rect x="77" y="6" width="1" height="1" fill="#7B93AD"/><rect x="78" y="5" width="1" height="1" fill="#7B93AD"/><rect x="79" y="4" width="1" height="1" fill="#7B93AD"/><rect x="80" y="3" width="1" height="1" fill="#7B93AD"/><rect x="81" y="2" width="1" height="1" fill="#7B93AD"/><rect x="82" y="1" width="1" height="1" fill="#7B93AD"/><rect x="83" y="0" width="1" height="1" fill="#7B93AD"/></svg>
<div class="a t" style="left:82px;top:339px;color:#000;">Labor</div>
<div class="a" style="left:10px;top:393px;width:1166px;height:1px;background:#A9A9A9"></div>
<div class="a" style="left:10px;top:395px;width:1166px;height:1px;background:#A9A9A9"></div>
<div class="a t" style="left:45px;top:369px;">Search :</div>
<div class="a t" style="left:120px;top:369px;">Asset</div>
<div class="a" style="left:162px;top:365px;width:120px;height:24px;background:#fff;border:1px solid #111;"></div>
<div class="a t" style="left:362px;top:369px;">Product</div>
<div class="a" style="left:412px;top:365px;width:195px;height:24px;background:#fff;border:1px solid #111;"></div>
<div class="a t" style="left:625px;top:368px;">Qty</div>
<div class="a" style="left:647px;top:365px;width:40px;height:24px;background:#fff;border:1px solid #111;"></div>
<div class="a t" style="left:648px;top:371px;color:#1a1a24">1</div>
<div class="a" style="left:707px;top:371px;width:13px;height:13px;border:1px solid #5C7088;border-right-color:#8796a8;border-bottom-color:#8796a8;background:linear-gradient(135deg,#ffffff 0%,#fbe3d2 35%,#F0A070 100%)"></div>
<div class="a t" style="left:724px;top:371px;">Update existing lines</div>
<div class="a" style="left:12px;top:397px;width:1162px;height:268px;border:1px solid #7A8EA6;background:#fff"></div>
<div class="a" style="left:13px;top:398px;width:1160px;height:249px;overflow:hidden"><div class="a" style="left:0;top:0;width:1160px;height:20px;background:#F47A45"></div><div class="a" style="left:0;top:20px;width:1160px;height:19px;background:#FD9B4B;border-bottom:1px solid #D0823F"></div><div class="a" style="left:0px;top:0;width:14px;height:19px;background:#C44E2D;border:1px solid #8E3216;box-shadow:inset 1px 1px 0 #FF6D3C"></div><div class="a t" style="left:0px;top:4px;width:14px;text-align:center;color:#fff;overflow:hidden">T</div><div class="a" style="left:0px;top:23px;width:13px;height:13px;border:1px solid #fff;"><div style="width:11px;height:11px;border:1px solid #6E8098;background:linear-gradient(135deg,#fde6d4 0%,#f7b07a 50%,#F08A38 100%)"></div></div><svg class="a" style="left:0px;top:23px" width="13" height="13"><path d="M3.8 7.2 L5.3 10 L10.5 4" stroke="#1a1a1a" stroke-width="2.2" fill="none"/></svg><div class="a" style="left:15px;top:0;width:14px;height:19px;background:#C44E2D;border:1px solid #8E3216;box-shadow:inset 1px 1px 0 #FF6D3C"></div><div class="a t" style="left:15px;top:4px;width:14px;text-align:center;color:#fff;overflow:hidden">C</div><div class="a" style="left:14px;top:20px;width:1px;height:19px;background:#C8803F"></div><div class="a" style="left:15px;top:23px;width:13px;height:13px;border:1px solid #fff;"><div style="width:11px;height:11px;border:1px solid #6E8098;background:linear-gradient(135deg,#fde6d4 0%,#f7b07a 50%,#F08A38 100%)"></div></div><div class="a" style="left:30px;top:0;width:14px;height:19px;background:#C44E2D;border:1px solid #8E3216;box-shadow:inset 1px 1px 0 #FF6D3C"></div><div class="a t" style="left:30px;top:4px;width:14px;text-align:center;color:#fff;overflow:hidden">X</div><div class="a" style="left:29px;top:20px;width:1px;height:19px;background:#C8803F"></div><div class="a" style="left:30px;top:23px;width:13px;height:13px;border:1px solid #fff;"><div style="width:11px;height:11px;border:1px solid #6E8098;background:linear-gradient(135deg,#fde6d4 0%,#f7b07a 50%,#F08A38 100%)"></div></div><div class="a" style="left:45px;top:0;width:14px;height:19px;background:#C44E2D;border:1px solid #8E3216;box-shadow:inset 1px 1px 0 #FF6D3C"></div><div class="a t" style="left:45px;top:4px;width:14px;text-align:center;color:#fff;overflow:hidden">M</div><div class="a" style="left:44px;top:20px;width:1px;height:19px;background:#C8803F"></div><div class="a" style="left:45px;top:23px;width:13px;height:13px;border:1px solid #fff;"><div style="width:11px;height:11px;border:1px solid #6E8098;background:linear-gradient(135deg,#fde6d4 0%,#f7b07a 50%,#F08A38 100%)"></div></div><div class="a" style="left:60px;top:0;width:14px;height:19px;background:#C44E2D;border:1px solid #8E3216;box-shadow:inset 1px 1px 0 #FF6D3C"></div><div class="a t" style="left:60px;top:4px;width:14px;text-align:center;color:#fff;overflow:hidden">S</div><div class="a" style="left:59px;top:20px;width:1px;height:19px;background:#C8803F"></div><div class="a" style="left:60px;top:23px;width:13px;height:13px;border:1px solid #fff;"><div style="width:11px;height:11px;border:1px solid #6E8098;background:linear-gradient(135deg,#fde6d4 0%,#f7b07a 50%,#F08A38 100%)"></div></div><div class="a" style="left:75px;top:0;width:19px;height:19px;background:#C44E2D;border:1px solid #8E3216;box-shadow:inset 1px 1px 0 #FF6D3C"></div><div class="a t" style="left:75px;top:4px;width:19px;text-align:center;color:#fff;overflow:hidden">I.C</div><div class="a" style="left:74px;top:20px;width:1px;height:19px;background:#C8803F"></div><div class="a" style="left:78px;top:23px;width:13px;height:13px;border:1px solid #fff;"><div style="width:11px;height:11px;border:1px solid #6E8098;background:linear-gradient(135deg,#fde6d4 0%,#f7b07a 50%,#F08A38 100%)"></div></div><div class="a" style="left:95px;top:0;width:19px;height:19px;background:#C44E2D;border:1px solid #8E3216;box-shadow:inset 1px 1px 0 #FF6D3C"></div><div class="a t" style="left:95px;top:4px;width:19px;text-align:center;color:#fff;overflow:hidden">I....</div><div class="a" style="left:94px;top:20px;width:1px;height:19px;background:#C8803F"></div><div class="a" style="left:98px;top:23px;width:13px;height:13px;border:1px solid #fff;"><div style="width:11px;height:11px;border:1px solid #6E8098;background:linear-gradient(135deg,#fde6d4 0%,#f7b07a 50%,#F08A38 100%)"></div></div><div class="a" style="left:115px;top:0;width:19px;height:19px;background:#C44E2D;border:1px solid #8E3216;box-shadow:inset 1px 1px 0 #FF6D3C"></div><div class="a t" style="left:115px;top:4px;width:19px;text-align:center;color:#fff;overflow:hidden">I.I</div><div class="a" style="left:114px;top:20px;width:1px;height:19px;background:#C8803F"></div><div class="a" style="left:118px;top:23px;width:13px;height:13px;border:1px solid #fff;"><div style="width:11px;height:11px;border:1px solid #6E8098;background:linear-gradient(135deg,#fde6d4 0%,#f7b07a 50%,#F08A38 100%)"></div></div><div class="a" style="left:135px;top:0;width:74px;height:19px;background:#C44E2D;border:1px solid #8E3216;box-shadow:inset 1px 1px 0 #FF6D3C"></div><div class="a t" style="left:135px;top:4px;width:74px;text-align:center;color:#fff;overflow:hidden">Status</div><div class="a" style="left:134px;top:20px;width:1px;height:19px;background:#C8803F"></div><div class="a t" style="left:137px;top:23px;color:#000">Reserved</div><div class="a" style="left:210px;top:0;width:19px;height:19px;background:#C44E2D;border:1px solid #8E3216;box-shadow:inset 1px 1px 0 #FF6D3C"></div><div class="a t" style="left:210px;top:4px;width:19px;text-align:center;color:#fff;overflow:hidden">L</div><div class="a" style="left:209px;top:20px;width:1px;height:19px;background:#C8803F"></div><div class="a" style="left:213px;top:23px;width:13px;height:13px;border:1px solid #fff;"><div style="width:11px;height:11px;border:1px solid #6E8098;background:linear-gradient(135deg,#fde6d4 0%,#f7b07a 50%,#F08A38 100%)"></div></div><div class="a" style="left:230px;top:0;width:44px;height:19px;background:#C44E2D;border:1px solid #8E3216;box-shadow:inset 1px 1px 0 #FF6D3C"></div><div class="a t" style="left:230px;top:4px;width:44px;text-align:center;color:#fff;overflow:hidden">Action</div><div class="a" style="left:229px;top:20px;width:1px;height:19px;background:#C8803F"></div><div class="a t" style="left:232px;top:23px;color:#000">Rent</div><div class="a" style="left:275px;top:0;width:99px;height:19px;background:#C44E2D;border:1px solid #8E3216;box-shadow:inset 1px 1px 0 #FF6D3C"></div><div class="a t" style="left:275px;top:4px;width:99px;text-align:center;color:#fff;overflow:hidden">Product ID</div><div class="a" style="left:274px;top:20px;width:1px;height:19px;background:#C8803F"></div><div class="a t" style="left:277px;top:23px;color:#000">LG STAR-NS</div><div class="a" style="left:375px;top:0;width:130px;height:19px;background:#C44E2D;border:1px solid #8E3216;box-shadow:inset 1px 1px 0 #FF6D3C"></div><div class="a t" style="left:375px;top:4px;width:130px;text-align:center;color:#fff;overflow:hidden">Description</div><div class="a" style="left:374px;top:20px;width:1px;height:19px;background:#C8803F"></div><div class="a t" style="left:382px;top:23px;color:#000">LG STAR-NS</div><div class="a" style="left:506px;top:0;width:54px;height:19px;background:#C44E2D;border:1px solid #8E3216;box-shadow:inset 1px 1px 0 #FF6D3C"></div><div class="a t" style="left:506px;top:4px;width:54px;text-align:center;color:#fff;overflow:hidden">Duration</div><div class="a" style="left:505px;top:20px;width:1px;height:19px;background:#C8803F"></div><div class="a t" style="left:508px;top:23px;color:#000">1d</div><div class="a" style="left:561px;top:0;width:29px;height:19px;background:#C44E2D;border:1px solid #8E3216;box-shadow:inset 1px 1px 0 #FF6D3C"></div><div class="a t" style="left:561px;top:4px;width:29px;text-align:center;color:#fff;overflow:hidden">Qty</div><div class="a" style="left:560px;top:20px;width:1px;height:19px;background:#C8803F"></div><div class="a t" style="left:561px;top:23px;width:27px;text-align:right;color:#000">1</div><div class="a" style="left:591px;top:0;width:99px;height:19px;background:#C44E2D;border:1px solid #8E3216;box-shadow:inset 1px 1px 0 #FF6D3C"></div><div class="a t" style="left:591px;top:4px;width:99px;text-align:center;color:#fff;overflow:hidden">Shipping Site</div><div class="a" style="left:590px;top:20px;width:1px;height:19px;background:#C8803F"></div><div class="a t" style="left:593px;top:23px;color:#000">PARIS</div><div class="a" style="left:691px;top:0;width:99px;height:19px;background:#C44E2D;border:1px solid #8E3216;box-shadow:inset 1px 1px 0 #FF6D3C"></div><div class="a t" style="left:691px;top:4px;width:99px;text-align:center;color:#fff;overflow:hidden">Returning Site</div><div class="a" style="left:690px;top:20px;width:1px;height:19px;background:#C8803F"></div><div class="a t" style="left:693px;top:23px;color:#000">BERLIN</div><div class="a" style="left:791px;top:0;width:39px;height:19px;background:#C44E2D;border:1px solid #8E3216;box-shadow:inset 1px 1px 0 #FF6D3C"></div><div class="a t" style="left:791px;top:4px;width:39px;text-align:center;color:#fff;overflow:hidden">Unit</div><div class="a" style="left:790px;top:20px;width:1px;height:19px;background:#C8803F"></div><div class="a t" style="left:793px;top:23px;color:#000">Day</div><div class="a" style="left:831px;top:0;width:89px;height:19px;background:#C44E2D;border:1px solid #8E3216;box-shadow:inset 1px 1px 0 #FF6D3C"></div><div class="a t" style="left:831px;top:4px;width:89px;text-align:center;color:#fff;overflow:hidden">Day/Each Price</div><div class="a" style="left:830px;top:20px;width:1px;height:19px;background:#C8803F"></div><div class="a t" style="left:831px;top:23px;width:87px;text-align:right;color:#000">0.00</div><div class="a" style="left:921px;top:0;width:69px;height:19px;background:#C44E2D;border:1px solid #8E3216;box-shadow:inset 1px 1px 0 #FF6D3C"></div><div class="a t" style="left:921px;top:4px;width:69px;text-align:center;color:#fff;overflow:hidden">Week Price</div><div class="a" style="left:920px;top:20px;width:1px;height:19px;background:#C8803F"></div><div class="a t" style="left:921px;top:23px;width:67px;text-align:right;color:#000">0.00</div><div class="a" style="left:991px;top:0;width:69px;height:19px;background:#C44E2D;border:1px solid #8E3216;box-shadow:inset 1px 1px 0 #FF6D3C"></div><div class="a t" style="left:991px;top:4px;width:69px;text-align:center;color:#fff;overflow:hidden">Month Price</div><div class="a" style="left:990px;top:20px;width:1px;height:19px;background:#C8803F"></div><div class="a t" style="left:991px;top:23px;width:67px;text-align:right;color:#000">0.00</div><div class="a" style="left:1061px;top:0;width:54px;height:19px;background:#C44E2D;border:1px solid #8E3216;box-shadow:inset 1px 1px 0 #FF6D3C"></div><div class="a t" style="left:1061px;top:4px;width:54px;text-align:center;color:#fff;overflow:hidden">Discount</div><div class="a" style="left:1060px;top:20px;width:1px;height:19px;background:#C8803F"></div><div class="a t" style="left:1061px;top:23px;width:52px;text-align:right;color:#000">0.00</div><div class="a" style="left:1116px;top:0;width:59px;height:19px;background:#C44E2D;border:1px solid #8E3216;box-shadow:inset 1px 1px 0 #FF6D3C"></div><div class="a t" style="left:1116px;top:4px;width:59px;text-align:center;color:#fff;overflow:hidden">Net Each</div><div class="a" style="left:1115px;top:20px;width:1px;height:19px;background:#C8803F"></div><div class="a t" style="left:1116px;top:23px;width:57px;text-align:right;color:#000">0.00</div></div>
<div class="a" style="left:13px;top:647px;width:1159px;height:16px;background:#EEEEEE;border-top:1px solid #7A8EA6;border-bottom:1px solid #7A8EA6;border-right:1px solid #7A8EA6"></div>
<div class="a" style="left:13px;top:663px;width:1160px;height:1px;background:#DDE8F5"></div>
<div class="a" style="left:600px;top:648px;width:571px;height:1px;background:#DDE8F5"></div>
<div class="a" style="left:13px;top:648px;width:15px;height:14px;background:#EEEEEE;border-top:1px solid #fff;border-left:1px solid #fff"></div>
<div class="a" style="left:19px;top:652px;width:0;height:0;border-right:4px solid #1a1a1a;border-top:4px solid transparent;border-bottom:4px solid transparent"></div>
<div class="a" style="left:1156px;top:648px;width:15px;height:14px;background:#EEEEEE;border-left:1px solid #7A8EA6;border-top:1px solid #fff"></div>
<div class="a" style="left:1162px;top:652px;width:0;height:0;border-left:4px solid #1a1a1a;border-top:4px solid transparent;border-bottom:4px solid transparent"></div>
<div class="a" style="left:28px;top:647px;width:572px;height:16px;border:1px solid #FFC200;background:linear-gradient(180deg,#F3CBAA 0%,#EEB48C 55%,#E8A072 100%)"></div>
<div class="a" style="left:312px;top:651px;width:5px;height:8px;border-left:1px solid #b58c6a;border-right:1px solid #b58c6a"><div style="margin-left:1px;width:1px;height:8px;background:#b58c6a"></div></div>
<div class="a" style="left:70px;top:678px;font-size:14px;line-height:16px;font-weight:bold;color:#1a1a24;white-space:nowrap;">Items</div>
<div class="a" style="left:120px;top:673px;width:100px;height:24px;background:#EEEEEE;border:1px solid #858585;"></div>
<div class="a" style="left:235px;top:678px;font-size:14px;line-height:16px;font-weight:bold;color:#1a1a24;white-space:nowrap;">Labor</div>
<div class="a" style="left:287px;top:673px;width:100px;height:24px;background:#EEEEEE;border:1px solid #858585;"></div>
<div class="a" style="left:446px;top:678px;font-size:14px;line-height:16px;font-weight:bold;color:#1a1a24;white-space:nowrap;">Sub Total</div>
<div class="a" style="left:525px;top:673px;width:100px;height:24px;background:#EEEEEE;border:1px solid #858585;"></div>
<div class="a" style="left:636px;top:678px;font-size:14px;line-height:16px;font-weight:bold;color:#1a1a24;white-space:nowrap;">Tax</div>
<div class="a" style="left:670px;top:673px;width:100px;height:24px;background:#EEEEEE;border:1px solid #858585;"></div>
<div class="a" style="left:813px;top:673px;width:89px;height:23px;border:1px solid #B4B4B4;background:#fff"></div>
<div class="a" style="left:842px;top:678px;font-size:14px;line-height:16px;font-weight:bold;color:#1a1a24;white-space:nowrap;">Total</div>
<div class="a" style="left:906px;top:673px;width:100px;height:24px;background:#EEEEEE;border:1px solid #858585;"></div>
<div class="a" style="left:907px;top:677px;font-size:14px;line-height:16px;font-weight:bold;color:#1a1a24;white-space:nowrap;color:#000">0.00</div>
<div class="a" style="left:8px;top:707px;width:1172px;height:24px;border:1px solid #C4C8CC;box-shadow:inset 1px 1px 0 #808080;background:#fff"></div>
<svg width="0" height="0" style="position:absolute"><defs>
<linearGradient id="gPage" x1="0" y1="0" x2="1" y2="1"><stop offset="0" stop-color="#ffffff"/><stop offset="1" stop-color="#d6e8f8"/></linearGradient>
<linearGradient id="gBlue" x1="0" y1="0" x2="0" y2="1"><stop offset="0" stop-color="#7fb8f0"/><stop offset="1" stop-color="#1a66d8"/></linearGradient>
<linearGradient id="gGrayBody" x1="0" y1="0" x2="0" y2="1"><stop offset="0" stop-color="#f4f4f4"/><stop offset="0.5" stop-color="#ffffff"/><stop offset="1" stop-color="#8a8a8a"/></linearGradient>
<radialGradient id="gBurst" cx="0.5" cy="0.5" r="0.5"><stop offset="0" stop-color="#ffe000"/><stop offset="0.45" stop-color="#ffb000"/><stop offset="0.75" stop-color="#ff3a1a"/><stop offset="1" stop-color="#ff6040" stop-opacity="0"/></radialGradient>
<linearGradient id="gFlop" x1="0" y1="0" x2="1" y2="0"><stop offset="0" stop-color="#bfe0fb"/><stop offset="0.15" stop-color="#2a88dc"/><stop offset="0.8" stop-color="#1a70cc"/><stop offset="1" stop-color="#7cc4f4"/></linearGradient>
<linearGradient id="gRedX" x1="0" y1="0" x2="0" y2="1"><stop offset="0" stop-color="#f8b0b0"/><stop offset="0.5" stop-color="#e42a2a"/><stop offset="1" stop-color="#f37a7a"/></linearGradient>
<radialGradient id="gBall" cx="0.35" cy="0.3" r="0.75"><stop offset="0" stop-color="#ffffff"/><stop offset="0.4" stop-color="#a8a8a8"/><stop offset="1" stop-color="#2a2a2a"/></radialGradient>
<radialGradient id="gBallY" cx="0.35" cy="0.3" r="0.75"><stop offset="0" stop-color="#fff6b0"/><stop offset="0.5" stop-color="#f5c518"/><stop offset="1" stop-color="#8a6400"/></radialGradient>
<radialGradient id="gSmile" cx="0.4" cy="0.3" r="0.7"><stop offset="0" stop-color="#fffbb0"/><stop offset="0.55" stop-color="#f2dc1c"/><stop offset="1" stop-color="#a08000"/></radialGradient>
<radialGradient id="gLens" cx="0.4" cy="0.35" r="0.65"><stop offset="0" stop-color="#ffffff"/><stop offset="0.5" stop-color="#a8d0ff"/><stop offset="1" stop-color="#5a8ad8"/></radialGradient>
<linearGradient id="gExit" x1="0" y1="0" x2="1" y2="1"><stop offset="0" stop-color="#e8a0a0"/><stop offset="0.3" stop-color="#ff4010"/><stop offset="1" stop-color="#ff9a30"/></linearGradient>
<radialGradient id="gDollar" cx="0.4" cy="0.35" r="0.7"><stop offset="0" stop-color="#9fd29f"/><stop offset="1" stop-color="#2c6a36"/></radialGradient>
<linearGradient id="gKey" x1="0" y1="0" x2="0" y2="1"><stop offset="0" stop-color="#ffffff"/><stop offset="1" stop-color="#b0b0b0"/></linearGradient>
<linearGradient id="gFold" x1="0" y1="0" x2="0" y2="1"><stop offset="0" stop-color="#fff4c0"/><stop offset="1" stop-color="#f0c040"/></linearGradient>
</defs></svg>
<svg class="a" style="left:10px;top:57px" width="34" height="34" viewBox="0 0 34 34"><path d="M9.5 6.5H21.5L27.5 12.5V28.5H9.5Z" fill="url(#gPage)" stroke="#4a6494" stroke-width="1"/><path d="M21.5 6.5V12.5H27.5" fill="#bcdcf4" stroke="#4a6494" stroke-width="1"/><circle cx="12.8" cy="11.7" r="5.2" fill="url(#gBurst)"/><circle cx="12.8" cy="11.7" r="1.8" fill="#ffd800"/></svg>
<svg class="a" style="left:45px;top:57px" width="29" height="34" viewBox="0 0 29 34"><path d="M3.5 12 Q3.5 10.5 5 10.5H25Q26.5 10.5 26.5 12V20Q26.5 23 22 25.5H8Q3.5 23 3.5 20Z" fill="url(#gGrayBody)" stroke="#6a6a6a" stroke-width="1"/><path d="M7 10.5H23V16Q23 18 21 18H9Q7 18 7 16Z" fill="url(#gBlue)"/><path d="M10.5 4.5H17.5L20.5 7.5V13.5H10.5Z" fill="#fff" stroke="#7a7a7a" stroke-width="1"/><path d="M10.5 21.5H20.5V28.5H10.5Z" fill="#fff" stroke="#6a6a6a" stroke-width="1"/><circle cx="23" cy="19.5" r="1.1" fill="#20a020"/></svg>
<svg class="a" style="left:88px;top:57px" width="34" height="34" viewBox="0 0 34 34"><path d="M6 7H27V26L25 28H9L6 25Z" fill="url(#gFlop)" stroke="#1560b8" stroke-width="0.8"/><rect x="9.5" y="7.5" width="14" height="10" fill="#fff6d0" stroke="#d08a30" stroke-width="1"/><rect x="11" y="10" width="11" height="1.6" fill="#f5a830"/><rect x="11" y="13.2" width="11" height="1.6" fill="#f5a830"/><rect x="11" y="20" width="8" height="7" fill="#ffffff"/><rect x="13" y="22" width="2" height="3" fill="#1a5ec8"/></svg>
<svg class="a" style="left:123px;top:57px" width="34" height="34" viewBox="0 0 34 34"><path d="M8 25 L13 14" stroke="#e8e8e8" stroke-width="3" opacity="0.7"/><path d="M10.5 23.5 L26 8" stroke="#d88a00" stroke-width="5.4" stroke-linecap="butt"/><path d="M10.5 23.5 L26 8" stroke="#f8b820" stroke-width="3.2"/><path d="M11.5 24 L26.5 9" stroke="#ffe070" stroke-width="1"/><path d="M6.5 28 L9 22 L12.5 25.5Z" fill="#f0d0a8"/><path d="M6.3 28.2 L7.3 25.8 L8.6 27.1Z" fill="#333"/><path d="M24.5 6.5 L28 10" stroke="#222" stroke-width="2.2"/><path d="M26 5 L29.5 8.5" stroke="#f05a28" stroke-width="2.4" stroke-linecap="round"/></svg>
<svg class="a" style="left:158px;top:57px" width="34" height="34" viewBox="0 0 34 34"><path d="M7 11L11 7L17 13L23 7L27 11L21 17L27 23L23 27L17 21L11 27L7 23L13 17Z" fill="url(#gRedX)" stroke="#c81818" stroke-width="0.6"/></svg>
<svg class="a" style="left:193px;top:57px" width="34" height="34" viewBox="0 0 34 34"><path d="M8 13L18 9.5L26 16L16.5 21Z" fill="#4a4a4a"/><path d="M17 10.8L25.3 18.3" stroke="#3c3c3c" stroke-width="8.4" stroke-linecap="round"/><path d="M17.2 10.2L24 16.2" stroke="#a8a8a8" stroke-width="3.6" stroke-linecap="round"/><path d="M8 13L15.8 20.6" stroke="#3c3c3c" stroke-width="8.8" stroke-linecap="round"/><path d="M8.3 12.2L14.8 18.6" stroke="#9a9a9a" stroke-width="3.8" stroke-linecap="round"/><path d="M8.6 10.8L12.5 14.6" stroke="#f0f0f0" stroke-width="1.3" stroke-linecap="round"/><ellipse cx="16.2" cy="21" rx="3.4" ry="3.8" fill="url(#gLens)" stroke="#444" stroke-width="0.7"/><ellipse cx="25.6" cy="18.5" rx="3.1" ry="3.6" fill="url(#gLens)" stroke="#444" stroke-width="0.7"/></svg>
<svg class="a" style="left:231px;top:57px" width="34" height="34" viewBox="0 0 34 34"><path d="M4.5 4.5H15.5L19.5 8.5V22.5H4.5Z" fill="url(#gPage)" stroke="#3a5aa0" stroke-width="1"/><rect x="5" y="5" width="8" height="3" fill="#f02020"/><path d="M7 12H15M7 15H15M7 18H15" stroke="#6a8ac8" stroke-width="1"/><path d="M15.5 11.5H25.5L29.5 15.5V29.5H15.5Z" fill="url(#gPage)" stroke="#3a5aa0" stroke-width="1"/><rect x="16" y="12" width="4" height="3" fill="#f02020"/><path d="M18 19H27M18 22H27M18 25H27" stroke="#6a8ac8" stroke-width="1"/><path d="M8.5 12.5 L20 23" stroke="#e00000" stroke-width="3.6"/><path d="M24 25.5 L15.5 24.5 L22.5 17Z" fill="#e00000"/></svg>
<svg class="a" style="left:266px;top:57px" width="34" height="34" viewBox="0 0 34 34"><path d="M10 6 L19 20 M24 6 L15 20" stroke="#9a9a9a" stroke-width="1.6" fill="none"/><path d="M10.8 6 L18.5 19 M23.2 6 L15.5 19" stroke="#f0f0f0" stroke-width="0.6" fill="none"/><circle cx="12.8" cy="23.8" r="3.3" fill="none" stroke="#2a78d8" stroke-width="2"/><circle cx="21.8" cy="23.8" r="3.3" fill="none" stroke="#2a78d8" stroke-width="2"/></svg>
<svg class="a" style="left:301px;top:57px" width="34" height="34" viewBox="0 0 34 34"><path d="M5.5 6.5H13.5L18.5 11.5V22.5H5.5Z" fill="url(#gPage)" stroke="#4a6494" stroke-width="1"/><path d="M13.5 6.5V11.5H18.5" fill="#bcdcf4" stroke="#4a6494" stroke-width="1"/><path d="M13.5 11.5H21.5L27.5 17.5V27.5H13.5Z" fill="url(#gPage)" stroke="#4a6494" stroke-width="1"/><path d="M21.5 11.5V17.5H27.5" fill="#bcdcf4" stroke="#4a6494" stroke-width="1"/></svg>
<svg class="a" style="left:489px;top:57px" width="28" height="34" viewBox="0 0 28 34"><path d="M3 20V6L7 10V6L11 10V6L15 10V3H19V20Z" fill="#f04818" stroke="#c83010" stroke-width="0.5"/><rect x="5" y="15" width="2" height="2" fill="#111"/><rect x="9" y="15" width="2" height="2" fill="#111"/><rect x="13" y="15" width="2" height="2" fill="#111"/><path d="M9 28V17L13 20.5V17L17 20.5V17L21 20.5V13H25V28Z" fill="#6a92b4" stroke="#4a6a88" stroke-width="0.5"/><rect x="11" y="24" width="2" height="2" fill="#111"/><rect x="15" y="24" width="2" height="2" fill="#111"/><rect x="19" y="24" width="2" height="2" fill="#111"/></svg>
<div class="a" style="left:516px;top:67px;font-size:10.6px;line-height:14px;font-weight:bold;color:#000;white-space:nowrap;transform:scaleX(0.89);transform-origin:0 0">Sub Rent</div>
<svg class="a" style="left:559px;top:57px" width="9" height="34"><path d="M2 10.5H7.5L4.75 15Z M2 17H7.5L4.75 21.5Z" fill="#111" stroke="#111" stroke-width="0.6" stroke-linejoin="round"/></svg>
<svg class="a" style="left:573px;top:57px" width="34" height="34" viewBox="0 0 34 34"><defs><linearGradient id="gPl" x1="0" y1="0" x2="0" y2="1"><stop offset="0" stop-color="#3aa03a"/><stop offset="0.5" stop-color="#8ad078"/><stop offset="1" stop-color="#f0ffd0"/></linearGradient><linearGradient id="gMi" x1="0" y1="0" x2="1" y2="0"><stop offset="0" stop-color="#ff7a50"/><stop offset="1" stop-color="#e81800"/></linearGradient></defs><path d="M15.5 6.5H18.5V11.5H23.5V14.5H18.5V19.5H15.5V14.5H10.5V11.5H15.5Z" fill="url(#gPl)" stroke="#128a12" stroke-width="1"/><rect x="9.5" y="22.5" width="15" height="4" fill="url(#gMi)" stroke="#e03a10" stroke-width="0.6"/></svg>
<svg class="a" style="left:608px;top:57px" width="34" height="34" viewBox="0 0 34 34"><circle cx="10" cy="10" r="5.6" fill="url(#gBall)" stroke="#111" stroke-width="1"/><circle cx="10" cy="22" r="5.6" fill="url(#gBall)" stroke="#111" stroke-width="1"/><circle cx="22" cy="22" r="5.6" fill="url(#gBall)" stroke="#111" stroke-width="1"/><circle cx="22" cy="10" r="5.6" fill="url(#gBallY)" stroke="#111" stroke-width="1"/><text x="22" y="13.6" font-family="Liberation Sans" font-weight="bold" font-size="9" text-anchor="middle" fill="#111">?</text></svg>
<svg class="a" style="left:643px;top:57px" width="34" height="34" viewBox="0 0 34 34"><path d="M6 8.5 L19 7 L22 28 L9 29.5Z" fill="#fff" stroke="#6070c0" stroke-width="1"/><path d="M7.5 13L20 11.6M8 16L20.5 14.6M8.4 19L21 17.6M8.8 22L21.4 20.6M9.2 25L21.8 23.6" stroke="#a8c8f0" stroke-width="0.8"/><path d="M10 9V29" stroke="#f08080" stroke-width="0.8"/><path d="M6.5 7.5L19 6" stroke="#333" stroke-width="2" stroke-dasharray="1 1"/><path d="M14 22L25.5 10.5" stroke="#2a8a2a" stroke-width="5.6"/><path d="M14 22L25.5 10.5" stroke="#64d848" stroke-width="3.4"/><path d="M12 25L13.3 20.8L16.2 23.7Z" fill="#d8b888"/><circle cx="26.3" cy="9.3" r="3.1" fill="#e8401a" stroke="#b02010" stroke-width="0.5"/></svg>
<svg class="a" style="left:678px;top:57px" width="29" height="34" viewBox="0 0 29 34"><path d="M4 9H22V29H4Z" fill="#a8a8a8"/><path d="M7 7H25V27H7Z" fill="#a0a0a0" stroke="#909090" stroke-width="0.6"/><path d="M8 6.5V10M11 6.5V10M14 6.5V10M17 6.5V10M20 6.5V10M23 6.5V10" stroke="#e8e8e8" stroke-width="1.4"/><text x="16" y="22" font-family="Liberation Sans" font-weight="bold" font-size="11" text-anchor="middle" fill="#8a8a8a">12</text><path d="M14 21L18 28L23 16" stroke="#8a8a8a" stroke-width="1.6" fill="none"/></svg>
<svg class="a" style="left:708px;top:57px" width="9" height="34"><path d="M2 10.5H7.5L4.75 15Z M2 17H7.5L4.75 21.5Z" fill="#9a9a9a" stroke="#9a9a9a" stroke-width="0.6" stroke-linejoin="round"/></svg>
<svg class="a" style="left:722px;top:57px" width="34" height="34" viewBox="0 0 34 34"><path d="M9.5 17V12H24.5V17" stroke="#888" stroke-width="1" fill="none"/><rect x="12" y="4" width="10" height="11" fill="#8e8e8e" stroke="#777" stroke-width="0.6"/><path d="M14 8H20M14 11H20" stroke="#c8c8c8" stroke-width="0.8"/><rect x="5" y="17" width="10" height="12" fill="#8e8e8e" stroke="#777" stroke-width="0.6"/><path d="M7 22H13M7 25H13" stroke="#c8c8c8" stroke-width="0.8"/><rect x="19" y="17" width="10" height="12" fill="#8e8e8e" stroke="#777" stroke-width="0.6"/><path d="M21 22H27M21 25H27" stroke="#c8c8c8" stroke-width="0.8"/></svg>
<svg class="a" style="left:758px;top:57px" width="34" height="34" viewBox="0 0 34 34"><ellipse cx="17" cy="27" rx="9" ry="2.5" fill="#c0a060" opacity="0.5"/><circle cx="17" cy="16" r="9.6" fill="url(#gSmile)" stroke="#b09000" stroke-width="0.6"/><ellipse cx="13.8" cy="12.5" rx="1" ry="1.8" fill="#333"/><ellipse cx="20.2" cy="12.5" rx="1" ry="1.8" fill="#333"/><path d="M11 17.5 Q17 23.5 23 17.5" stroke="#333" stroke-width="1.5" fill="none"/></svg>
<svg class="a" style="left:793px;top:57px" width="34" height="34" viewBox="0 0 34 34"><defs><linearGradient id="gFb" x1="0" y1="0" x2="1" y2="1"><stop offset="0" stop-color="#fffbe0"/><stop offset="1" stop-color="#f6d040"/></linearGradient><radialGradient id="gClk" cx="0.45" cy="0.4" r="0.6"><stop offset="0" stop-color="#f0fcff"/><stop offset="1" stop-color="#a0d4f0"/></radialGradient></defs><path d="M11.5 9.5H20L21.5 7.2H27.5V25.5H11.5Z" fill="url(#gFb)" stroke="#d8981c" stroke-width="1"/><path d="M13 12.5H24V24H13Z" fill="#fff3a0" opacity="0.8"/><path d="M6.5 13.5H11.5V26.5H10.5Z" fill="#f6cf48" stroke="#d8981c" stroke-width="1"/><circle cx="21.4" cy="20.9" r="6" fill="url(#gClk)" stroke="#7a8898" stroke-width="1"/><path d="M18.6 18.2L21.4 22L24 18.6" stroke="#111" stroke-width="1.2" fill="none"/></svg>
<svg class="a" style="left:828px;top:57px" width="34" height="34" viewBox="0 0 34 34"><defs><linearGradient id="gKR" x1="0" y1="0" x2="1" y2="0"><stop offset="0" stop-color="#e8e8e8"/><stop offset="1" stop-color="#8a8a8a"/></linearGradient><linearGradient id="gKL" x1="0" y1="0" x2="0" y2="1"><stop offset="0" stop-color="#ffffff"/><stop offset="1" stop-color="#d0d0d0"/></linearGradient></defs><path d="M7.6 10.6L17.5 15.2L17 26.7L4.6 19.8Z" fill="url(#gKL)" stroke="#b8b8b8" stroke-width="0.5"/><path d="M17.5 15.2L25.7 9.9L29.4 18.4L17 26.7Z" fill="url(#gKR)" stroke="#9a9a9a" stroke-width="0.5"/><path d="M7.6 10.6L15.2 6.9L25.7 9.9L17.5 15.2Z" fill="#f8f8f8" stroke="#c8c8c8" stroke-width="0.5"/><path d="M11 11.5L20.5 9.5L17 14M13 11L19 12" stroke="#1a5ae0" stroke-width="1.8" fill="none" stroke-linecap="round"/></svg>
<svg class="a" style="left:863px;top:57px" width="34" height="34" viewBox="0 0 34 34"><defs><linearGradient id="gCw" x1="0" y1="0" x2="1" y2="0"><stop offset="0" stop-color="#fff" stop-opacity="0.1"/><stop offset="0.45" stop-color="#fff" stop-opacity="0.75"/><stop offset="0.55" stop-color="#fff" stop-opacity="0.1"/><stop offset="1" stop-color="#fff" stop-opacity="0.5"/></linearGradient></defs><rect x="11" y="9.5" width="9" height="16.0" fill="#000" rx="1.2"/><rect x="12" y="10.5" width="7" height="4.1" fill="#20a020"/><rect x="12" y="10.5" width="7" height="4.1" fill="url(#gCw)"/><rect x="12" y="16.0" width="7" height="4.1" fill="#4060f0"/><rect x="12" y="16.0" width="7" height="4.1" fill="url(#gCw)"/><rect x="12" y="21.5" width="7" height="3.6" fill="#f04040"/><rect x="12" y="21.5" width="7" height="3.6" fill="url(#gCw)"/><rect x="3.5" y="11.5" width="11.5" height="17.0" fill="#000" rx="1.2"/><rect x="4.5" y="12.5" width="9.5" height="5.1" fill="#30b030"/><rect x="4.5" y="12.5" width="9.5" height="5.1" fill="url(#gCw)"/><rect x="4.5" y="19.0" width="9.5" height="3.6" fill="#5a6cf8"/><rect x="4.5" y="19.0" width="9.5" height="3.6" fill="url(#gCw)"/><rect x="4.5" y="24.0" width="9.5" height="4.1" fill="#f04848"/><rect x="4.5" y="24.0" width="9.5" height="4.1" fill="url(#gCw)"/><rect x="18.5" y="5.5" width="12" height="21.8" fill="#000" rx="1.2"/><rect x="19.5" y="6.5" width="10" height="5.1" fill="#f0f050"/><rect x="19.5" y="6.5" width="10" height="5.1" fill="url(#gCw)"/><rect x="19.5" y="13.0" width="10" height="4.1" fill="#40b040"/><rect x="19.5" y="13.0" width="10" height="4.1" fill="url(#gCw)"/><rect x="19.5" y="18.5" width="10" height="3.4" fill="#5a6cf8"/><rect x="19.5" y="18.5" width="10" height="3.4" fill="url(#gCw)"/><rect x="19.5" y="23.3" width="10" height="3.6" fill="#f05050"/><rect x="19.5" y="23.3" width="10" height="3.6" fill="url(#gCw)"/></svg>
<svg class="a" style="left:898px;top:57px" width="34" height="34" viewBox="0 0 34 34"><rect x="5.5" y="5.5" width="18" height="22" fill="#fff" stroke="#2a6ac8" stroke-width="1"/><rect x="6" y="6" width="17" height="3" fill="#f0a030"/><path d="M8 12H16M8 15H14M8 18H15M8 21H12" stroke="#4a7ad0" stroke-width="0.9"/><path d="M12 22L24 10" stroke="#2a8a2a" stroke-width="4.4"/><path d="M12 22L24 10" stroke="#58c040" stroke-width="2.2"/><path d="M10 25L11.2 20.9L14.1 23.8Z" fill="#e8c890"/><path d="M23 8.5L26.5 12" stroke="#e03a28" stroke-width="3"/></svg>
<svg class="a" style="left:933px;top:57px" width="34" height="34" viewBox="0 0 34 34"><path d="M15 4L20 9.5L15 15" stroke="#1a5ad8" stroke-width="3" fill="none"/><path d="M21 4L26 9.5L21 15" stroke="#1a5ad8" stroke-width="3" fill="none"/><circle cx="12" cy="22" r="6.6" fill="url(#gDollar)" stroke="#2c5a30" stroke-width="0.6"/><text x="12" y="26" font-family="Liberation Sans" font-weight="bold" font-size="11" text-anchor="middle" fill="#fff">$</text></svg>
<svg class="a" style="left:968px;top:57px" width="34" height="34" viewBox="0 0 34 34"><path d="M13 7L27 5L30 19L16 22Z" fill="#fff8a0" stroke="#e0c040" stroke-width="0.8"/><path d="M15 10L26 8.4M15.6 13L27 11.4M16.2 16L27.6 14.4" stroke="#d8c060" stroke-width="0.9"/><circle cx="10" cy="22" r="6.6" fill="url(#gDollar)" stroke="#2c5a30" stroke-width="0.6"/><text x="10" y="26" font-family="Liberation Sans" font-weight="bold" font-size="11" text-anchor="middle" fill="#fff">$</text></svg>
<svg class="a" style="left:1003px;top:57px" width="34" height="34" viewBox="0 0 34 34"><rect x="4" y="7" width="12" height="9" fill="#2a60c0"/><rect x="4" y="7" width="12" height="3" fill="#20a030"/><rect x="4" y="13" width="12" height="3" fill="#d02020"/><path d="M14 9Q19 6 23 12L25 10V15H20L22 13Q19 10 16 11Z" fill="#30b030"/><rect x="11" y="17" width="13" height="10" fill="#e84a30"/><path d="M24 19H28L31 23V27H24Z" fill="#8aa0c0" stroke="#506080" stroke-width="0.6"/><circle cx="14.5" cy="28" r="2" fill="#222"/><circle cx="27" cy="28" r="2" fill="#222"/></svg>
<svg class="a" style="left:1073px;top:57px" width="34" height="34" viewBox="0 0 34 34"><path d="M8 15Q7 10 12 10Q14 6 18 9Q22 8 22 12Q26 13 24 18Q23 22 18 21Q14 24 11 21Q6 20 8 15Z" fill="#f4f4f4" stroke="#555" stroke-width="0.7"/><path d="M20 16Q24 15 25 19Q24 23 20 22Z" fill="#8a8a8a"/><path d="M25 5L15.5 13.5L20 14L8 26L23 15.5L18.5 15Z" fill="#f8cc20" stroke="#a08000" stroke-width="0.5"/></svg>
<svg class="a" style="left:1144px;top:57px" width="34" height="34" viewBox="0 0 34 34"><rect x="6.5" y="6.5" width="21" height="21" rx="2" fill="url(#gExit)" stroke="#a01010" stroke-width="1"/><text x="17" y="21.2" font-family="Liberation Sans" font-size="9.6" text-anchor="middle" fill="#fff" letter-spacing="-0.3">EXIT</text></svg>
<div class="a " style="left:341px;top:51px;width:146px;height:61px;background:#EEEEEE;border:1px solid #8FA3C8;"></div>
<div class="a t" style="left:347px;top:56px;color:#1c1c3a;letter-spacing:0.17px">Change Shipping Site</div>
<div class="a t" style="left:347px;top:75px;color:#1c1c3a;letter-spacing:0.17px">Change Returning Site</div>
<div class="a t" style="left:347px;top:94px;color:#9a9a9a;letter-spacing:0.15px">Ops Modifications</div>
<div class="a" style="left:476px;top:97px;width:0;height:0;border-left:4px solid #909090;border-top:4px solid transparent;border-bottom:4px solid transparent"></div>
<div class="a " style="left:340px;top:50px;width:148px;height:38px;border:2px solid #C00008;"></div>
</body></html>
